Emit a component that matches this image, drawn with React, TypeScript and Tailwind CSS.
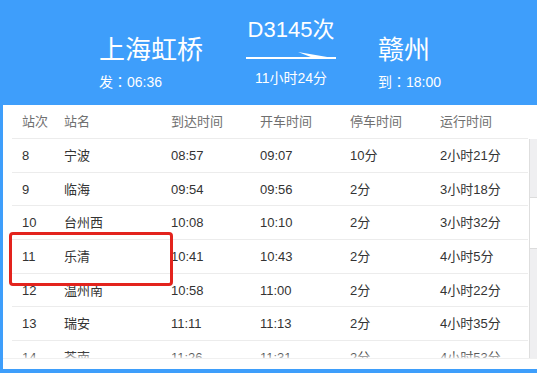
import React from "react";

const rows = [
  ["8", "宁波", "08:57", "09:07", "10分", "2小时21分"],
  ["9", "临海", "09:54", "09:56", "2分", "3小时18分"],
  ["10", "台州西", "10:08", "10:10", "2分", "3小时32分"],
  ["11", "乐清", "10:41", "10:43", "2分", "4小时5分"],
  ["12", "温州南", "10:58", "11:00", "2分", "4小时22分"],
  ["13", "瑞安", "11:11", "11:13", "2分", "4小时35分"],
  ["14", "苍南", "11:26", "11:31", "2分", "4小时53分"],
];

const font = {
  fontFamily: '"Liberation Sans", Arial, "Noto Sans CJK SC", sans-serif',
};

function Cells({ cells, header }: { cells: string[]; header?: boolean }) {
  const widths = ["w-[42px]", "w-[107px]", "w-[89px]", "w-[90px]", "w-[90px]", "flex-1"];
  return (
    <div className="flex items-center h-full pl-[10px]">
      {cells.map((c, i) => (
        <div
          key={i}
          className={`${widths[i]} shrink-0 text-[13px] leading-none whitespace-nowrap ${
            header ? "text-[#707070]" : "text-[#333333]"
          }`}
        >
          {c}
        </div>
      ))}
    </div>
  );
}

function Colon() {
  return (
    <span className="font-['Noto_Sans_CJK_TC',sans-serif]">：</span>
  );
}

export default function App() {
  return (
    <div
      className="relative w-[537px] h-[373px] bg-[#3e9efb] overflow-hidden flex flex-col"
      style={font}
    >
      {/* Header */}
      <div className="h-[105px] shrink-0 flex pl-[99px] text-white">
        <div className="w-[147px] pt-[37px] flex flex-col items-start">
          <div className="text-[26px] leading-[26px]">上海虹桥</div>
          <div className="mt-[11px] text-[14px] leading-none">
            发<Colon />06:36
          </div>
        </div>
        <div className="w-[90px] pt-[19px] flex flex-col items-center">
          <div className="text-[22px] leading-[22px]">D3145次</div>
          <svg width="90" height="10" viewBox="0 0 90 10" className="mt-[9px] block">
            <rect x="0" y="7" width="90" height="2" fill="#ffffff" />
            <polygon points="52,2 90,8.6 66,7.5" fill="#ffffff" />
          </svg>
          <div className="mt-[11px] text-[14px] leading-none">11小时24分</div>
        </div>
        <div className="ml-[42px] pt-[37px] flex flex-col items-start">
          <div className="text-[26px] leading-[26px]">赣州</div>
          <div className="mt-[11px] text-[14px] leading-none">
            到<Colon />18:00
          </div>
        </div>
      </div>

      {/* Table panel */}
      <div className="ml-[3px] h-[264px] shrink-0 bg-white flex flex-col">
        <div className="h-[34px] shrink-0 pr-[9px]">
          <div className="ml-[9px] h-full border-b border-[#ececec]">
            <Cells header cells={["站次", "站名", "到达时间", "开车时间", "停车时间", "运行时间"]} />
          </div>
        </div>
        <div className="flex h-[219px] shrink-0">
          <div className="relative flex-1 overflow-hidden">
            {rows.map((r, i) => (
              <div key={i} className="h-[33.7px] ml-[9px] mr-[1px] border-b border-[#ececec]">
                <Cells cells={r} />
              </div>
            ))}
            <div className="absolute left-0 right-0 bottom-0 h-[6px] bg-gradient-to-b from-white/0 to-white/70" />
          </div>
          <div className="w-[8px] shrink-0 border-l border-[#dedede] flex flex-col">
            <div className="h-[58px] bg-[#efeff1]" />
            <div className="h-[52px] bg-white border-y border-[#dcdcdc]" />
            <div className="flex-1 bg-[#efeff1]" />
          </div>
        </div>
        <div className="flex-1 bg-white border-t border-[#f0f0f0]" />
      </div>

      {/* Highlight box */}
      <div className="absolute left-[9px] top-[232px] w-[164px] h-[54px] border-[3px] border-[#e3231d] rounded-[4px]" />
    </div>
  );
}
